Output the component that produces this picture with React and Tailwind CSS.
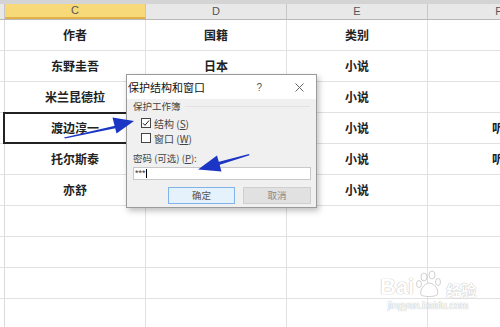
import React from "react";

const rows = [
    ["作者", "国籍", "类别", ""],
    ["东野圭吾", "日本", "小说", ""],
    ["米兰昆德拉", "", "小说", ""],
    ["渡边淳一", "", "小说", "听"],
    ["托尔斯泰", "", "小说", "听"],
    ["亦舒", "", "小说", ""],
    ["", "", "", ""],
    ["", "", "", ""],
    ["", "", "", ""],
    ["", "", "", ""],
];

const cjk = { fontFamily: '"Noto Sans CJK SC", "Liberation Sans", sans-serif' };

function Checkbox({ checked }) {
    return (
        <div className="w-[10px] h-[10px] bg-white border border-[#444] flex items-center justify-center">
            {checked && (
                <svg width="8" height="8" viewBox="0 0 8 8">
                    <path d="M1 4.2 L3 6.3 L7 1.5" fill="none" stroke="#222" strokeWidth="1" />
                </svg>
            )}
        </div>
    );
}

function Dialog() {
    return (
        <div
            className="absolute left-[126px] top-[74px] w-[191px] h-[134px] border border-[#9a9a9a] bg-[#f0f0f0] shadow-[2px_3px_6px_rgba(0,0,0,0.25)] flex flex-col"
            style={cjk}
        >
            {/* TITLE BAR */}
            <div className="h-[24px] bg-white flex items-center pl-[1px] pr-[12px] text-[11px] text-[#111]">
                <span className="flex-1">保护结构和窗口</span>
                <span className="text-[10px] text-[#555] mr-[33px]" style={{ fontFamily: '"Liberation Sans", sans-serif' }}>?</span>
                <svg width="9" height="9" viewBox="0 0 9 9">
                    <path d="M0.5 0.5 L8.5 8.5 M8.5 0.5 L0.5 8.5" stroke="#666" strokeWidth="1" />
                </svg>
            </div>

            {/* BODY */}
            <div className="flex-1 flex flex-col px-[6px] text-[9.5px] text-[#444]">
                <div className="flex items-center gap-1 mt-[1px] h-[12px]">
                    <span>保护工作簿</span>
                    <div className="flex-1 h-px bg-[#e2e2e2]" />
                </div>
                <div className="flex items-center gap-[3px] ml-[8px] mt-[6px] h-[10px] text-[10px]">
                    <Checkbox checked />
                    <span>结构 (<span className="underline">S</span>)</span>
                </div>
                <div className="flex items-center gap-[3px] ml-[8px] mt-[5px] h-[10px] text-[10px]">
                    <Checkbox />
                    <span>窗口 (<span className="underline">W</span>)</span>
                </div>
                <div className="mt-[9px] h-[12px] flex items-center">
                    密码 (可选) (<span className="underline">P</span>):
                </div>
                <div className="mt-[3px] mr-[-1px] h-[13px] bg-white border border-[#c8c8c8] flex items-center px-[1px] text-[9px] text-[#333]" style={{ fontFamily: '"Liberation Sans", sans-serif' }}>
                    ***<span className="w-px h-[9px] bg-black" />
                </div>
                <div className="mt-[7px] flex justify-end gap-[8px] mr-[-1px]">
                    <div className="w-[67px] h-[17px] bg-[#e5f1fb] border border-[#7eb4ea] flex items-center justify-center text-[#555]">确定</div>
                    <div className="w-[68px] h-[17px] bg-[#e1e1e1] border border-[#cfcfcf] flex items-center justify-center text-[#888]">取消</div>
                </div>
            </div>
        </div>
    );
}

function Arrows() {
    return (
        <svg className="absolute left-0 top-0 pointer-events-none" width="500" height="327">
            <polygon points="64,137.5 115,125.8 115.5,128.3 65,138.5" fill="#1b35c4" />
            <polygon points="134,121 112.5,117.5 116.5,133.5" fill="#1b35c4" />
            <polygon points="249,154 218,162 219,165 249.5,155.2" fill="#1b35c4" />
            <polygon points="198,169.5 217,155.5 221.5,171.5" fill="#1b35c4" />
        </svg>
    );
}

function Watermark() {
    const shadow = { textShadow: "0 0 1px #bdbdbd, 0 0 1px #bdbdbd" };
    return (
        <div className="absolute left-[380px] top-[270px] flex flex-col items-center text-white" style={{ fontFamily: '"Liberation Sans", sans-serif' }}>
            <div className="flex items-end">
                <span className="text-[22px] font-bold leading-none" style={shadow}>Bai</span>
                <svg width="30" height="28" viewBox="0 0 30 28" className="mx-[1px]">
                    <g fill="white" stroke="#c4c4c4" strokeWidth="0.8">
                        <ellipse cx="9" cy="7" rx="3" ry="4" />
                        <ellipse cx="17" cy="5" rx="3" ry="4" />
                        <ellipse cx="4" cy="14" rx="2.5" ry="3.5" />
                        <ellipse cx="23" cy="12" rx="2.5" ry="3.5" />
                        <path d="M6 25 C4 20 10 13 14 13 C19 13 25 20 22 25 C19 27 9 27 6 25 Z" />
                    </g>
                </svg>
                <span className="text-[15px] font-bold leading-none mb-[1px]" style={{ ...cjk, ...shadow }}>经验</span>
            </div>
            <span className="text-[10px] leading-none mt-[3px]" style={shadow}>jingyan.baidu.com</span>
        </div>
    );
}

export default function App() {
    return (
        <div className="relative w-[500px] h-[327px] overflow-hidden bg-white">
            {/* COLUMN HEADERS */}
            <div className="h-[4px] bg-[#d4d4d4]" />
            <div className="flex h-[16px] bg-[#e8e8e8] border-b border-[#b8b8b8] text-[11px] text-[#555]" style={{ fontFamily: '"Liberation Sans", sans-serif' }}>
                <div className="w-[5px] shrink-0 border-r border-[#c6c6c6]" />
                <div className="w-[141px] shrink-0 flex items-center justify-center bg-[#f7d97a] border-b-2 border-[#e2b04a] border-r border-r-[#c6c6c6]">C</div>
                <div className="w-[141px] shrink-0 flex items-center justify-center border-r border-[#c6c6c6]">D</div>
                <div className="w-[141px] shrink-0 flex items-center justify-center border-r border-[#c6c6c6]">E</div>
                <div className="w-[141px] shrink-0 flex items-center justify-center">F</div>
            </div>

            {/* ROWS */}
            {rows.map((r, i) => (
                <div key={i} className="flex h-[31px] border-b border-[#e1e1e1] text-[12px] font-bold text-[#222]" style={cjk}>
                    <div className="w-[5px] shrink-0 border-r border-[#dadada]" />
                    {r.map((c, j) => (
                        <div key={j} className="relative w-[141px] shrink-0 flex items-center justify-center border-r border-[#e1e1e1]">
                            {c}
                            {i === 3 && j === 0 && (
                                <div className="absolute left-[-2px] top-[-1px] right-[-1px] bottom-[-1px] border-2 border-[#222]" />
                            )}
                        </div>
                    ))}
                </div>
            ))}

            <Watermark />
            <Dialog />
            <Arrows />
        </div>
    );
}
